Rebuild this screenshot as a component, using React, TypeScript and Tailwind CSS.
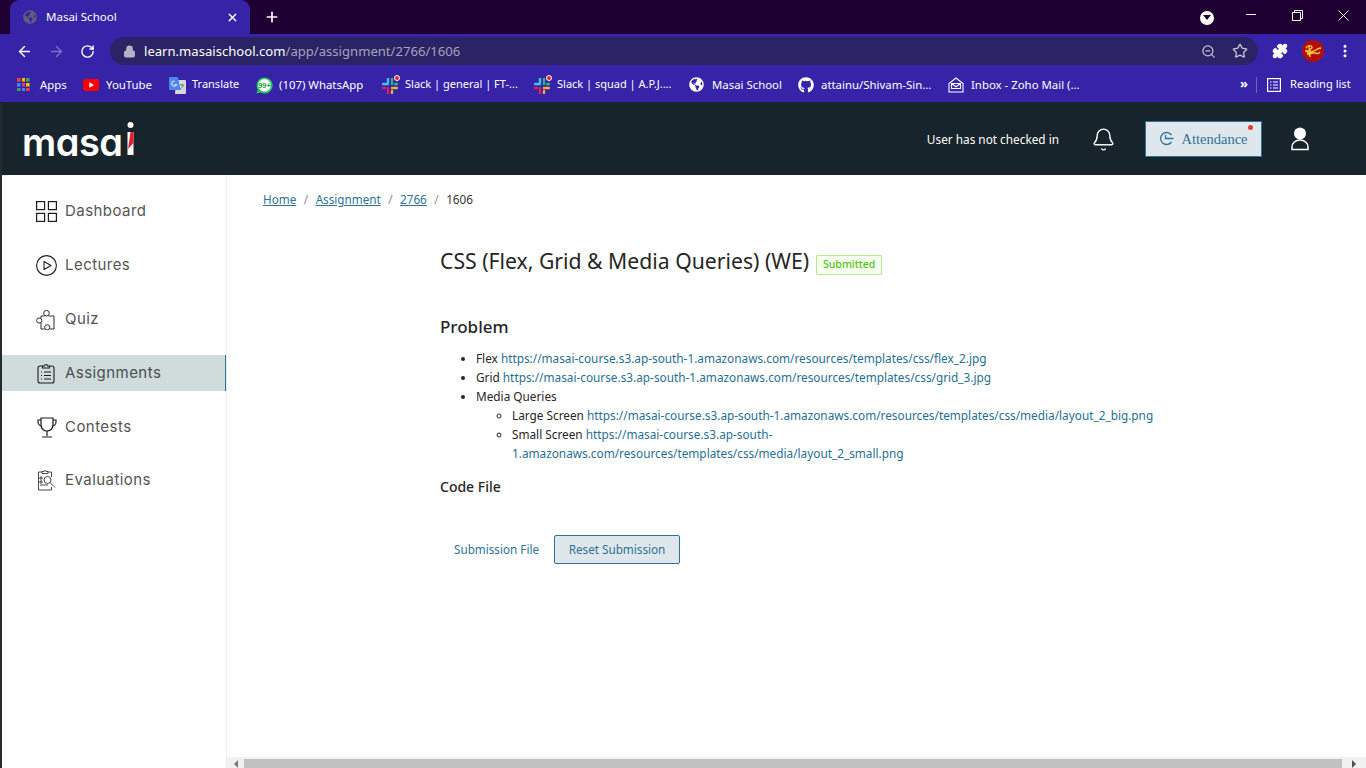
import { ArrowLeft, ArrowRight, Bell, Lock, MoreVertical, Plus, Puzzle, RotateCw, Star, X, ZoomOut } from "lucide-react";
import type { ReactNode } from "react";
import { FaGithub, FaGlobeAmericas } from "react-icons/fa";

const uiFont = "font-['Noto_Sans','Open_Sans',sans-serif]";

function Apps() {
  const colors = ["#ea4335", "#fbbc04", "#34a853", "#4285f4", "#ea4335", "#fbbc04", "#34a853", "#4285f4", "#ea4335"];
  return (
    <div className="grid grid-cols-3 gap-[1px] w-[13px] h-[13px]">
      {colors.map((c, i) => (
        <svg key={i} width="3.6" height="3.6" viewBox="0 0 4 4">
          <rect width="4" height="4" fill={c} />
        </svg>
      ))}
    </div>
  );
}

function YouTube() {
  return (
    <svg width="16" height="12" viewBox="0 0 16 12">
      <rect width="16" height="12" rx="3" fill="#f00" />
      <path d="M6.3 3.2 11 6l-4.7 2.8z" fill="#fff" />
    </svg>
  );
}

function Translate() {
  return (
    <svg width="17" height="17" viewBox="0 0 17 17">
      <path d="M7 3h9a1 1 0 0 1 1 1v12a1 1 0 0 1-1 1H6z" fill="#d5d9de" />
      <path d="M1 0h8l2.500 13H1a1 1 0 0 1-1-1V1a1 1 0 0 1 1-1z" fill="#4d86e8" />
      <path d="M5.500 4a2.600 2.600 0 1 0 2.300 3.600H5.600" fill="none" stroke="#fff" strokeWidth="1" />
      <path d="M11 8h4M13 7v1.500M14.300 8c-.5 2-1.800 3.400-3.300 4.200" fill="none" stroke="#6b7280" strokeWidth=".9" />
    </svg>
  );
}

function WhatsApp() {
  return (
    <svg width="17" height="17" viewBox="0 0 17 17">
      <path d="M8.500.5a8 8 0 0 0-6.900 12L.5 16.500l4.100-1.100A8 8 0 1 0 8.500.5z" fill="#25c35a" />
      <circle cx="8.500" cy="8.300" r="6.300" fill="#fff" />
      <text x="8.500" y="11" textAnchor="middle" fontSize="7.500" fontWeight="700" fill="#17a345" fontFamily="Liberation Sans">99+</text>
    </svg>
  );
}

function Slack() {
  return (
    <div className="relative w-4 h-4">
      <svg width="16" height="16" viewBox="0 0 16 16" className="mt-[1px]">
        <path d="M1 6h5" stroke="#36c5f0" strokeWidth="2.400" strokeLinecap="round" />
        <path d="M6 1v3" stroke="#36c5f0" strokeWidth="2.400" strokeLinecap="round" />
        <path d="M10 1v5" stroke="#2eb67d" strokeWidth="2.400" strokeLinecap="round" />
        <path d="M13 6h2" stroke="#2eb67d" strokeWidth="2.400" strokeLinecap="round" />
        <path d="M15 10h-5" stroke="#ecb22e" strokeWidth="2.400" strokeLinecap="round" />
        <path d="M10 13v2" stroke="#ecb22e" strokeWidth="2.400" strokeLinecap="round" />
        <path d="M6 15v-5" stroke="#e01e5a" strokeWidth="2.400" strokeLinecap="round" />
        <path d="M1 10h2" stroke="#e01e5a" strokeWidth="2.400" strokeLinecap="round" />
      </svg>
      <span className="absolute -top-[2px] -right-[2px] w-[6px] h-[6px] rounded-full bg-[#e02b20] border border-white" />
    </div>
  );
}

function Zoho() {
  return (
    <svg width="16" height="16" viewBox="0 0 16 16" fill="none" stroke="#fff" strokeWidth="1.100">
      <path d="M8 1 1 6.500V15h14V6.500z" />
      <path d="M3.500 6.500h9v5h-9zM3.500 6.500 8 9.800l4.500-3.300" />
    </svg>
  );
}

function Avatar() {
  return (
    <svg width="22" height="22" viewBox="0 0 22 22">
      <circle cx="11" cy="11" r="11" fill="#b30f0a" />
      <path d="M4 8c2-3 5-3 6-1s-3 2-3 4 3 1 5 0 4-3 7-3M5 14c3 1 5-2 8-1s3 1 5-1M7 6l1 11M3 11h6M4 10l4 6" fill="none" stroke="#f6c83a" strokeWidth="1.400" />
    </svg>
  );
}

function Bookmark({ icon, label, width, small }: { icon: ReactNode; label: string; width: string; small?: boolean }) {
  return (
    <div className={`flex items-center shrink-0 ${width} ${small ? "text-[11px]" : "text-[11.400px]"}`}>
      <span className="w-[23px] flex items-center shrink-0">{icon}</span>
      <span className="whitespace-nowrap -mt-[1px]">{label}</span>
    </div>
  );
}

function BrowserChrome() {
  return (
    <div className={`text-white ${uiFont}`}>
      {/* tab strip */}
      <div className="h-[34px] bg-[#1f0033] flex items-end">
        <div className="ml-[10px] w-[240px] h-[34px] bg-[#3623a8] rounded-t-[9px] flex items-center pl-[13px] pr-[11px] text-[11.500px]">
          <FaGlobeAmericas className="text-[#5f5f7a] w-[14px] h-[14px] shrink-0" />
          <span className="ml-[9px] flex-1 -mt-[1px]">Masai School</span>
          <X size={13} strokeWidth={2.500} />
        </div>
        <div className="ml-[14px] h-[34px] flex items-center">
          <Plus size={16} strokeWidth={2.500} />
        </div>
        <div className="flex-1" />
        <div className="h-[34px] flex items-center">
          <div className="w-[14px] h-[14px] rounded-full bg-white flex items-center justify-center mr-[14px] mt-[1px]">
            <div className="w-0 h-0 border-x-[4px] border-x-transparent border-t-[5px] border-t-[#1f0033]" />
          </div>
          <div className="w-[46px] flex justify-center -mt-[6px]">
            <svg width="10" height="1"><rect width="10" height="1" fill="#fff" /></svg>
          </div>
          <div className="w-[46px] flex justify-center -mt-[4px]">
            <svg width="11" height="11" viewBox="0 0 11 11" fill="none" stroke="#fff">
              <path d="M.5 2.500h8v8h-8zM2.500 2.500v-2h8v8h-2" />
            </svg>
          </div>
          <div className="w-[46px] flex justify-center -mt-[4px]">
            <svg width="11" height="11" viewBox="0 0 11 11" stroke="#fff" strokeWidth="1">
              <path d="M.5.5l10 10M10.500.5l-10 10" />
            </svg>
          </div>
        </div>
      </div>
      {/* toolbar */}
      <div className="h-[34px] bg-[#3623a8] flex items-center">
        <div className="w-[110px] flex items-center shrink-0 pl-[16px]">
          <ArrowLeft size={17} strokeWidth={2} />
          <ArrowRight size={17} strokeWidth={2} className="ml-[15px] text-[#7b70c8]" />
          <RotateCw size={15} strokeWidth={2.200} className="ml-[15px]" />
        </div>
        <div className="w-[1148px] h-[28px] rounded-full bg-[#2a2366] flex items-center pl-[13px] pr-[10px] text-[13.100px]">
          <Lock size={13} className="text-[#b5b3c8]" fill="#b5b3c8" />
          <span className="ml-[8px] mt-[1px]">learn.masaischool.com</span>
          <span className="text-[#a5a3bb] mt-[1px]">/app/assignment/2766/1606</span>
          <div className="flex-1" />
          <ZoomOut size={15} className="text-[#c5c4d4]" />
          <Star size={16} className="ml-[16px] text-[#c5c4d4]" />
        </div>
        <Puzzle size={16} fill="#fff" className="ml-[14px]" />
        <div className="ml-[14px]"><Avatar /></div>
        <MoreVertical size={16} strokeWidth={2.500} className="ml-[13px]" />
      </div>
      {/* bookmarks bar */}
      <div className="h-[34px] bg-[#3623a8] flex items-center pl-[17px]">
        <Bookmark icon={<Apps />} label="Apps" width="w-[66px]" />
        <Bookmark icon={<YouTube />} label="YouTube" width="w-[86px]" />
        <Bookmark icon={<Translate />} label="Translate" width="w-[87px]" small />
        <Bookmark icon={<WhatsApp />} label="(107) WhatsApp" width="w-[126px]" />
        <Bookmark icon={<Slack />} label="Slack | general | FT-..." width="w-[152px]" small />
        <Bookmark icon={<Slack />} label="Slack | squad | A.P.J...." width="w-[155px]" small />
        <Bookmark icon={<FaGlobeAmericas className="w-[15px] h-[15px]" />} label="Masai School" width="w-[109px]" />
        <Bookmark icon={<FaGithub className="w-[16px] h-[16px]" />} label="attainu/Shivam-Sin..." width="w-[150px]" />
        <Bookmark icon={<Zoho />} label="Inbox - Zoho Mail (..." width="w-[292px]" />
        <span className="text-[13px] font-bold w-[16px] -mt-[2px]">»</span>
        <div className="w-px h-[16px] bg-[#6f63bd]" />
        <div className="ml-[10px] flex items-center text-[11.100px]">
          <svg width="14" height="14" viewBox="0 0 14 14" fill="none" stroke="#fff" strokeWidth="1.200">
            <rect x=".6" y=".6" width="12.800" height="12.800" />
            <path d="M3 4h1.500M6 4h5M3 7h1.500M6 7h5M3 10h1.500M6 10h5" />
          </svg>
          <span className="ml-[9px] -mt-[1px]">Reading list</span>
        </div>
      </div>
      <div className="h-px bg-[#18242b]" />
    </div>
  );
}

function Logo() {
  return (
    <div className="flex items-end h-[36px] font-['Inter',sans-serif] font-semibold text-white text-[38px] tracking-[-0.5px] leading-none [font-feature-settings:'cv11']">
      <span className="leading-[36px] -mb-[3px]">masa</span>
      <svg width="7" height="34" viewBox="0 0 7 34" className="ml-[4px] mb-[2px]">
        <circle cx="3.500" cy="4" r="3" fill="#fff" />
        <rect x=".5" y="11" width="6" height="23" fill="#fff" />
        <path d="M3.500 11h3v11L1 28z" fill="#e5202e" />
      </svg>
    </div>
  );
}

function Header() {
  return (
    <div className="h-[72px] bg-[#18242b] flex items-center pl-[20px]">
      <Logo />
      <div className="flex-1" />
      <span className={`text-white text-[11.800px] mt-[1px] ${uiFont}`}>User has not checked in</span>
      <Bell size={25} strokeWidth={1.300} className="ml-[32px] text-white" />
      <div className="relative ml-[29px] w-[117px] h-[36px] bg-[#dfe7ec] border border-[#2c7396] flex items-center justify-center font-['Liberation_Serif',serif] text-[14.500px] text-[#2c7396]">
        <svg width="15" height="15" viewBox="0 0 15 15" fill="none" stroke="#2c7396" strokeWidth="1.300" className="mr-[7px] -mt-[1px]">
          <path d="M12.500 4A6 6 0 1 0 12.500 11M6.500 4v3.500h8" />
        </svg>
        <span className="mt-[1px]">Attendance</span>
        <span className="absolute top-[3px] right-[8px] w-[5px] h-[5px] rounded-full bg-[#e5393c]" />
      </div>
      <svg width="18" height="24" viewBox="0 0 18 24" className="ml-[29px] mr-[57px]" fill="none">
        <circle cx="9" cy="6.500" r="6" fill="#fff" />
        <path d="M1 22.500v-2.500a8 7 0 0 1 16 0v2.500z" stroke="#fff" strokeWidth="1.500" />
      </svg>
    </div>
  );
}

function NavIcon({ name }: { name: string }) {
  if (name === "Dashboard") {
    return (
      <svg width="21" height="21" viewBox="0 0 21 21" fill="none" stroke="#1c1c1c" strokeWidth="1.200">
        <rect x=".6" y=".6" width="8" height="8" />
        <rect x="12.400" y=".6" width="8" height="8" />
        <rect x=".6" y="12.400" width="8" height="8" />
        <rect x="12.400" y="12.400" width="8" height="8" />
      </svg>
    );
  }
  if (name === "Lectures") {
    return (
      <svg width="21" height="21" viewBox="0 0 21 21" fill="none" stroke="#1c1c1c" strokeWidth="1.100">
        <circle cx="10.500" cy="10.500" r="9.900" />
        <path d="M8 6.500 15 10.500 8 14.500z" strokeLinejoin="round" />
      </svg>
    );
  }
  if (name === "Quiz") {
    return (
      <svg width="20" height="21" viewBox="0 0 20 21" fill="none" stroke="#2a2a2a" strokeWidth="1">
        <path d="M5 9V7h3.500M12.500 7H18v13h-4M8.500 20H5v-6" />
        <circle cx="10.500" cy="4.200" r="2.800" />
        <circle cx="3.200" cy="11.500" r="2.600" />
        <circle cx="11.200" cy="18.300" r="2.600" />
      </svg>
    );
  }
  if (name === "Assignments") {
    return (
      <svg width="18" height="21" viewBox="0 0 18 21" fill="none" stroke="#1c1c1c" strokeWidth="1.100" className="ml-[1px]">
        <path d="M5.500 3H3a2 2 0 0 0-2 2v13a2 2 0 0 0 2 2h12a2 2 0 0 0 2-2V5a2 2 0 0 0-2-2h-2.500" />
        <path d="M5.500 5V3H7.500a1.500 1.500 0 0 1 3 0h2v2z" />
        <path d="M4 9h1M7 9h7M4 12.500h1M7 12.500h7M4 16h1M7 16h7" />
      </svg>
    );
  }
  if (name === "Contests") {
    return (
      <svg width="20" height="21" viewBox="0 0 20 21" fill="none" stroke="#1c1c1c" strokeWidth="1.200" className="ml-[1px]">
        <path d="M4 1h12v7a6 6 0 0 1-12 0z" />
        <path d="M4 3H1v2a4 4 0 0 0 4 4M16 3h3v2a4 4 0 0 1-4 4M10 14v5M5 20h10" />
      </svg>
    );
  }
  return (
    <svg width="19" height="22" viewBox="0 0 19 22" fill="none" stroke="#333" strokeWidth=".9" className="ml-[1px]">
      <path d="M5 3H1.500v18h13v-3M11 3h3.500v5M5 4.500V2.500h2a1 1 0 0 1 2 0h2v2z" />
      <circle cx="10.500" cy="11" r="3.500" />
      <path d="M13 13.500 18 18.500M3 8h2v2H3zM3 12h2v2H3zM3 16h8" />
    </svg>
  );
}

function Sidebar() {
  const items = ["Dashboard", "Lectures", "Quiz", "Assignments", "Contests", "Evaluations"];
  return (
    <div className="w-[225px] shrink-0 border-r border-[#ebedf5] pt-[18px] flex flex-col gap-[18px] font-['Inter',sans-serif] text-[15px] tracking-[0.45px] text-[#555]">
      {items.map((name) => (
        <div
          key={name}
          className={`h-[36px] flex items-center pl-[34px] ${name === "Assignments" ? "bg-[#d0dcdc] border-r border-[#2c7396] text-[#484f4f]" : ""} ${name === "Evaluations" ? "-mt-[1px]" : ""}`}
        >
          <span className="w-[29px] flex items-center shrink-0">
            <NavIcon name={name} />
          </span>
          <span className="mt-[1px]">{name}</span>
        </div>
      ))}
    </div>
  );
}

function ScrollBar() {
  return (
    <div className="h-[11px] bg-[#f1f1f1] flex items-end shrink-0">
      <div className="w-[17px] h-[9px] flex items-center justify-center">
        <div className="w-0 h-0 border-y-[4px] border-y-transparent border-r-[4px] border-r-[#7a7a7a]" />
      </div>
      <div className="w-[1098px] h-[9px] bg-[#c1c1c1]" />
      <div className="flex-1 h-[9px] flex items-center justify-center">
        <div className="w-0 h-0 border-y-[4px] border-y-transparent border-l-[4px] border-l-[#505050]" />
      </div>
    </div>
  );
}

function Url({ href }: { href: string }) {
  return <a className="text-[#1f6f94]">{href}</a>;
}

function Content() {
  return (
    <div className={`flex-1 min-w-0 flex flex-col ${uiFont} text-[#262626]`}>
      <div className="flex-1 min-h-0">
        {/* breadcrumb */}
        <div className="pl-[36px] pt-[15px] h-[49px] text-[11.700px] leading-[19px] flex text-[#8c8c8c]">
          <a className="underline text-[#2c7396]">Home</a>
          <span className="mx-[7.500px]">/</span>
          <a className="underline text-[#2c7396]">Assignment</a>
          <span className="mx-[7.500px]">/</span>
          <a className="underline text-[#2c7396]">2766</a>
          <span className="mx-[7.500px]">/</span>
          <span className="text-[#333]">1606</span>
        </div>

        <div className="ml-[213px] w-[716px]">
          <div className="flex items-center h-[26px] mt-[24px]">
            <h1 className="text-[21.200px] leading-[26px] whitespace-nowrap">CSS (Flex, Grid &amp; Media Queries) (WE)</h1>
            <span className="ml-[7px] h-[20px] w-[66px] flex items-center justify-center bg-[#f6ffed] border border-[#b7eb8f] text-[#52c41a] text-[10.500px] font-medium rounded-[1px] mt-[8px]">
              Submitted
            </span>
          </div>

          <h2 className="text-[17px] leading-[24px] font-medium mt-[41px]">Problem</h2>

          <ul className="list-disc pl-[36px] mt-[10px] text-[11.800px] leading-[19px]">
            <li>
              Flex <Url href="https://masai-course.s3.ap-south-1.amazonaws.com/resources/templates/css/flex_2.jpg" />
            </li>
            <li>
              Grid <Url href="https://masai-course.s3.ap-south-1.amazonaws.com/resources/templates/css/grid_3.jpg" />
            </li>
            <li>
              Media Queries
              <ul className="list-[circle] pl-[36px]">
                <li>
                  Large Screen <Url href="https://masai-course.s3.ap-south-1.amazonaws.com/resources/templates/css/media/layout_2_big.png" />
                </li>
                <li>
                  Small Screen <Url href="https://masai-course.s3.ap-south-1.amazonaws.com/resources/templates/css/media/layout_2_small.png" />
                </li>
              </ul>
            </li>
          </ul>

          <h3 className="text-[14px] leading-[20px] font-medium mt-[14px]">Code File</h3>

          <div className="flex items-center mt-[38px] pl-[14px] text-[11.700px]">
            <a className="text-[#2c7396] w-[100px] whitespace-nowrap">Submission File</a>
            <button className="w-[126px] h-[29px] bg-[#dfe7ec] border border-[#2c7396] rounded-[2px] text-[#2c7396]">Reset Submission</button>
          </div>
        </div>
      </div>
      <ScrollBar />
    </div>
  );
}

export default function App() {
  return (
    <div className="w-[1366px] h-[768px] overflow-hidden flex flex-col bg-white">
      <BrowserChrome />
      <div className="flex-1 min-h-0 flex border-l-2 border-[#262a2e]">
        <div className="flex-1 min-w-0 flex flex-col">
          <Header />
          <div className="flex-1 min-h-0 flex">
            <Sidebar />
            <Content />
          </div>
        </div>
      </div>
    </div>
  );
}
